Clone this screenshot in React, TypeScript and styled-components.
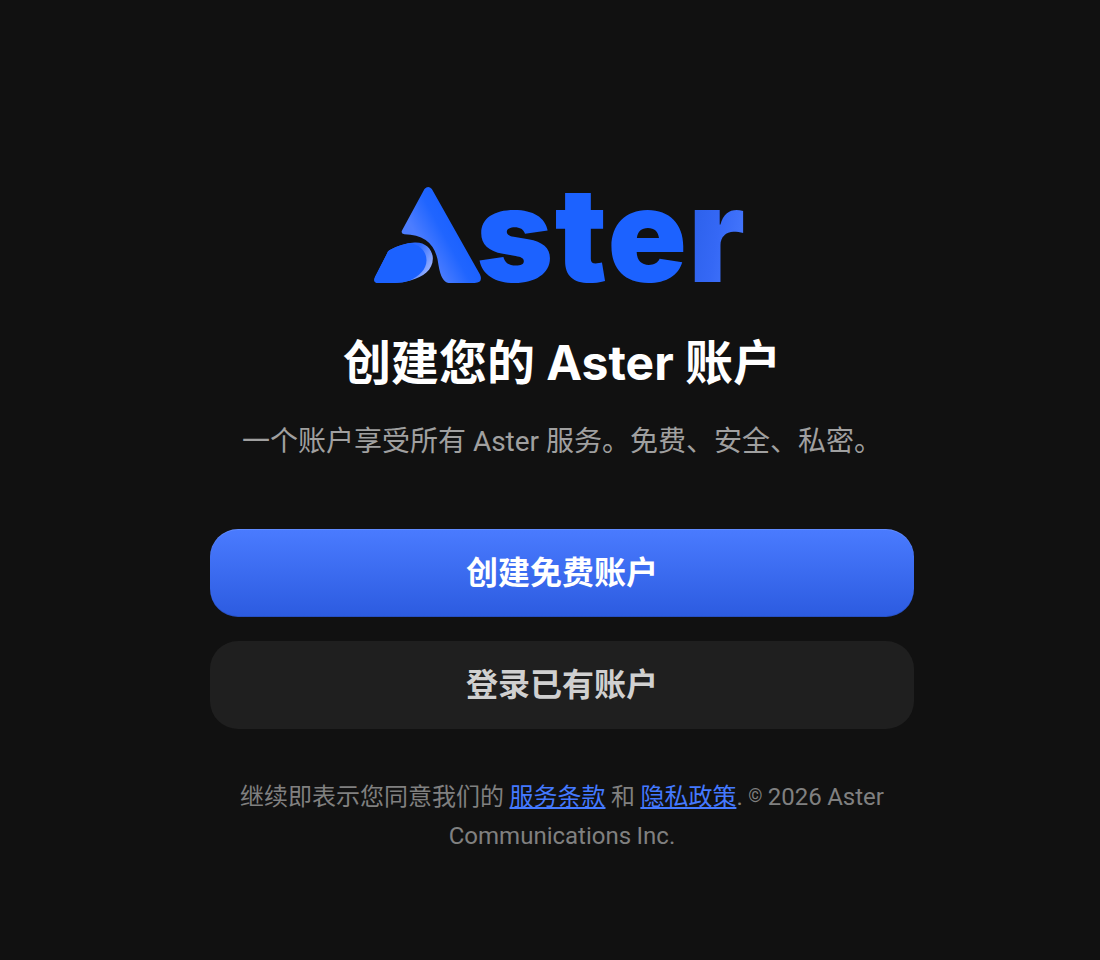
import styled, { createGlobalStyle } from "styled-components";

const GlobalStyle = createGlobalStyle`
  html, body {
    margin: 0;
    padding: 0;
    background-color: #111111;
  }
`;

const Page = styled.main`
  box-sizing: border-box;
  width: 1100px;
  height: 960px;
  padding: 186px 186px 0 210px;
  background-color: #111111;
  font-family: Roboto, "Noto Sans CJK SC", sans-serif;
`;

const Column = styled.div`
  display: flex;
  flex-direction: column;
  align-items: center;
  width: 704px;
`;

const Logo = styled.div`
  display: flex;
  align-items: flex-end;
  height: 98px;
  margin-left: -4px;
`;

const Wordmark = styled.div`
  display: flex;
  height: 98px;
  margin-left: -6px;
  font-family: Inter, sans-serif;
  font-size: 131px;
  font-weight: 900;
  line-height: 97px;
  letter-spacing: 1.5px;
  color: #1c62ff;
`;

const LastLetter = styled.span`
  background: linear-gradient(100deg, #2a5fe8 0%, #3568f5 50%, #4a7bff 100%);
  -webkit-background-clip: text;
  background-clip: text;
  color: transparent;
`;

const Title = styled.h1`
  margin: 49px 0 0;
  font-family: Inter, "Noto Sans CJK SC", sans-serif;
  font-size: 48px;
  font-weight: 700;
  line-height: 60px;
  color: #ffffff;
`;

const Subtitle = styled.p`
  margin: 29px 0 0;
  font-size: 28px;
  line-height: 40px;
  color: #a0a0a0;
`;

const Buttons = styled.div`
  display: flex;
  flex-direction: column;
  gap: 24px;
  width: 100%;
  margin-top: 67px;
`;

const Button = styled.button<{ $primary?: boolean }>`
  box-sizing: border-box;
  width: 100%;
  height: 88px;
  padding: 0 0 6px;
  border: none;
  border-radius: 28px;
  font-family: inherit;
  font-size: 32px;
  font-weight: 700;
  color: ${(p) => (p.$primary ? "#ffffff" : "#d0d0d0")};
  background: ${(p) =>
    p.$primary ? "linear-gradient(180deg, #4a7bff 0%, #2c5be0 100%)" : "#1f1f1f"};
  box-shadow: ${(p) =>
    p.$primary ? "inset 0 1px 0 rgba(255, 255, 255, 0.12), inset 0 -1px 0 rgba(0, 0, 0, 0.12)" : "none"};
`;

const Legal = styled.p`
  margin: 47px 0 0;
  font-size: 24px;
  line-height: 39px;
  word-spacing: -0.5px;
  text-align: center;
  color: #808080;
`;

const LegalLink = styled.a`
  color: #4479ff;
  text-decoration: underline;
`;

const Copyright = styled.span`
  font-size: 18px;
  vertical-align: 3px;
`;

function LogoMark() {
  return (
    <svg width="109" height="98" viewBox="36 33 326 293" aria-hidden="true">
      <defs>
        <linearGradient id="peak" x1="280" y1="170" x2="189" y2="221" gradientUnits="userSpaceOnUse">
          <stop offset="0" stopColor="#1c62ff" />
          <stop offset="0.3" stopColor="#2065ff" />
          <stop offset="1" stopColor="#4c7dff" />
        </linearGradient>
        <linearGradient id="rim" x1="165" y1="225" x2="215" y2="255" gradientUnits="userSpaceOnUse">
          <stop offset="0" stopColor="#2a68ff" />
          <stop offset="1" stopColor="#8eaaff" />
        </linearGradient>
      </defs>
      <path
        d="M190 42 Q201 30 212 42 L356 298 Q366 322 340 323 L262 323 Q240 320 232 270 Q222 178 130 177 Q117 175 124 164 Z"
        fill="url(#peak)"
      />
      <path
        d="M85 225 Q120 205 160 202 C195 200 215 225 215 250 C215 285 185 305 150 315 Q125 323 100 323 L50 323 Q35 322 42 305 L78 235 Q80 228 85 225 Z"
        fill="url(#rim)"
      />
      <path
        d="M85 225 Q110 210 145 204 C178 208 196 230 196 255 C196 282 175 302 145 316 Q125 323 100 323 L50 323 Q35 322 42 305 L78 235 Q80 228 85 225 Z"
        fill="#1c62ff"
      />
    </svg>
  );
}

export default function App() {
  return (
    <>
      <GlobalStyle />
      <Page>
        <Column>
          <Logo>
            <LogoMark />
            <Wordmark>
              ste<LastLetter>r</LastLetter>
            </Wordmark>
          </Logo>
          <Title>创建您的 Aster 账户</Title>
          <Subtitle>一个账户享受所有 Aster 服务。免费、安全、私密。</Subtitle>
          <Buttons>
            <Button $primary>创建免费账户</Button>
            <Button>登录已有账户</Button>
          </Buttons>
          <Legal>
            继续即表示您同意我们的 <LegalLink href="#">服务条款</LegalLink> 和{" "}
            <LegalLink href="#">隐私政策</LegalLink>. <Copyright>©</Copyright> 2026 Aster Communications Inc.
          </Legal>
        </Column>
      </Page>
    </>
  );
}
